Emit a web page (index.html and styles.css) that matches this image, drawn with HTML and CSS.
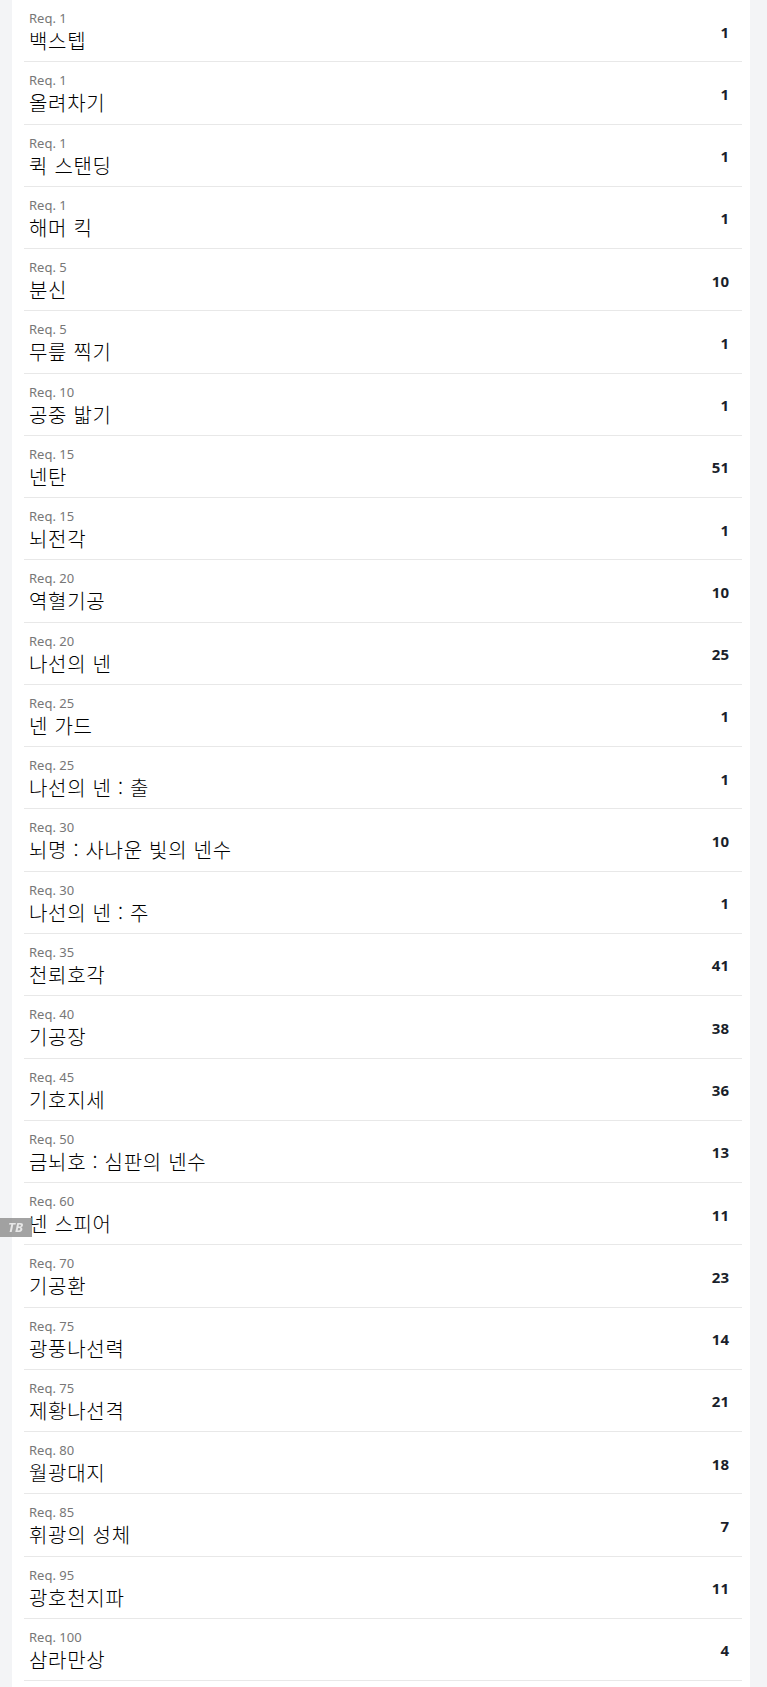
FILE: index.html
```html
<!DOCTYPE html>
<html lang="ko">
<head>
    <meta charset="UTF-8">
    <meta name="viewport" content="width=device-width, initial-scale=1.0">
    <title>스킬 목록</title>
    <link rel="stylesheet" href="styles.css">
</head>
<body>
<div class="page">
    <div class="panel">
        <ul class="skills" id="skills"></ul>
    </div>
</div>
<div class="badge">TB</div>

<script>
    let skills = [
        [1, "백스텝", 1],
        [1, "올려차기", 1],
        [1, "퀵 스탠딩", 1],
        [1, "해머 킥", 1],
        [5, "분신", 10],
        [5, "무릎 찍기", 1],
        [10, "공중 밟기", 1],
        [15, "넨탄", 51],
        [15, "뇌전각", 1],
        [20, "역혈기공", 10],
        [20, "나선의 넨", 25],
        [25, "넨 가드", 1],
        [25, "나선의 넨 : 출", 1],
        [30, "뇌명 : 사나운 빛의 넨수", 10],
        [30, "나선의 넨 : 주", 1],
        [35, "천뢰호각", 41],
        [40, "기공장", 38],
        [45, "기호지세", 36],
        [50, "금뇌호 : 심판의 넨수", 13],
        [60, "넨 스피어", 11],
        [70, "기공환", 23],
        [75, "광풍나선력", 14],
        [75, "제황나선격", 21],
        [80, "월광대지", 18],
        [85, "휘광의 성체", 7],
        [95, "광호천지파", 11],
        [100, "삼라만상", 4]
    ];

    let list = document.getElementById("skills");

    skills.forEach(function (s) {
        let li = document.createElement("li");
        li.className = "skill";
        li.innerHTML =
            '<div class="info">' +
                '<div class="req">Req. ' + s[0] + '</div>' +
                '<div class="name">' + s[1] + '</div>' +
            '</div>' +
            '<div class="level">' + s[2] + '</div>';
        list.appendChild(li);
    });
</script>
</body>
</html>
```

FILE: styles.css
```css
* {
    margin: 0;
    padding: 0;
    box-sizing: border-box;
}
body {
    background: #f3f4f6;
    font-family: "Noto Sans", "Noto Sans CJK KR", sans-serif;
    color: #111;
}
.page {
    padding: 0 17px 0 12px;
    min-height: 100vh;
}
.panel {
    background: #fff;
    min-height: 100vh;
    padding: 0 8px 0 12px;
}
.skills {
    list-style: none;
}
.skill {
    display: flex;
    align-items: center;
    justify-content: space-between;
    padding: 9px 13px 7.27px 5px;
    border-bottom: 1px solid #e8e8e8;
}
.req {
    font-size: 13px;
    line-height: 18px;
    color: #777;
}
.name {
    font-family: "Noto Sans CJK KR", "Noto Sans", sans-serif;
    font-size: 20px;
    line-height: 27px;
    letter-spacing: 0.7px;
    font-weight: 300;
    color: #000;
}
.level {
    font-size: 15px;
    font-weight: bold;
    color: #1a1f2b;
}
.badge {
    position: fixed;
    left: 0;
    top: 1218px;
    width: 32px;
    height: 19px;
    background: rgba(140, 140, 140, 0.8);
    color: #e8e8e8;
    font-size: 13px;
    font-weight: bold;
    font-style: italic;
    line-height: 19px;
    padding-left: 8px;
}
```
